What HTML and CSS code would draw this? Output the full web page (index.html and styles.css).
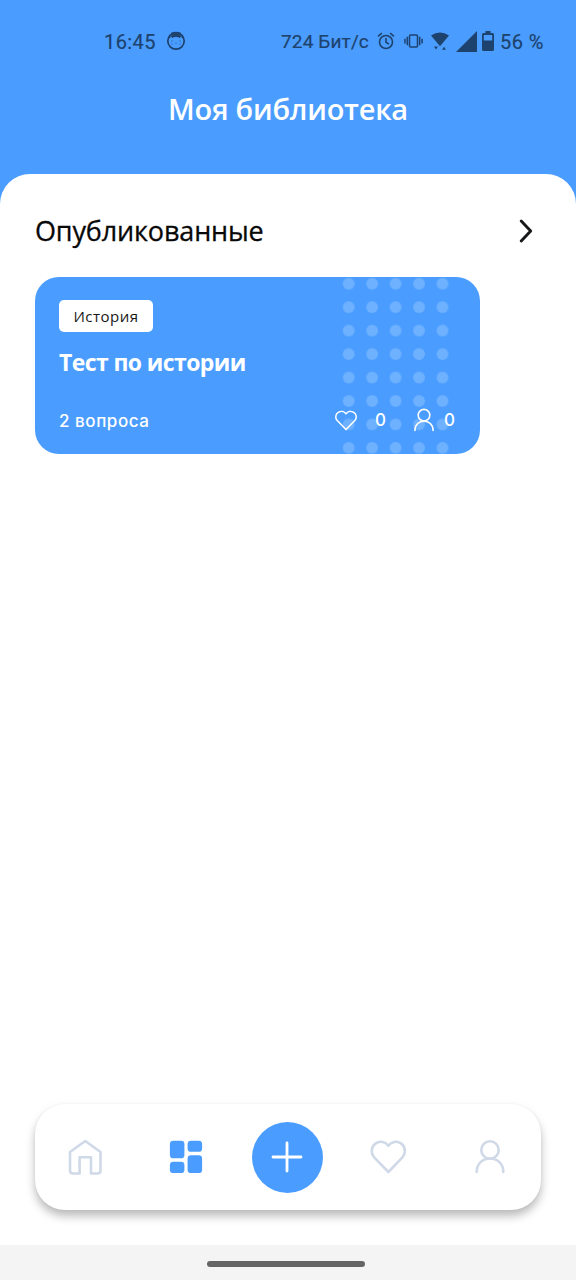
FILE: index.html
```html
<!DOCTYPE html>
<html lang="ru">
<head>
<meta charset="utf-8">
<title>Моя библиотека</title>
<link rel="stylesheet" href="styles.css">
</head>
<body>
<div class="app">
  <header class="header">
    <div class="status">
      <span class="clock">16:45</span>
      <svg class="cat" width="20" height="20" viewBox="0 0 20 20"><circle cx="10" cy="10" r="8.200" fill="none" stroke="currentColor" stroke-width="1.700"/><path d="M5 1.800Q10-.5 15 1.800L14 7.300Q12.500 5.800 10 6Q7.500 5.800 6 7.300Z" fill="currentColor"/><path d="M3 7l3-2M17 7l-3-2" stroke="currentColor" stroke-width="1"/><path d="M5.500 10h1M13.500 10h1M5.500 13h1M13.500 13h1M9.500 12.200h1" stroke="currentColor" stroke-width=".8"/></svg>
      <span class="speed">724 Бит/с</span>
      <svg class="alarm" width="18" height="18" viewBox="0 0 18 18" fill="none" stroke="currentColor" stroke-width="1.600"><circle cx="9" cy="10" r="6.500"/><path d="M1 4.400L4.800 1.200M17 4.400L13.200 1.200M9 6v4.300l3 1.800"/></svg>
      <svg class="vibrate" width="19" height="18" viewBox="0 0 20 18" fill="none" stroke="currentColor" stroke-width="1.600"><rect x="5.800" y="2.800" width="8.400" height="12.400" rx="1"/><path d="M3.500 4.500v9M1 6.500v5M16.500 4.500v9M19 6.500v5"/></svg>
      <svg class="wifi" width="20" height="20" viewBox="0 0 20 20" fill="currentColor"><path d="M1 4.500Q10-1.500 19 4.500L10 15.200Z"/><path d="M4 15.500h4l-2 3zM12 18.800h4l-2-3z"/></svg>
      <svg class="signal" width="21" height="21" viewBox="0 0 21 21"><path d="M0 21L21 0V21Z" fill="currentColor"/></svg>
      <svg class="battery" width="12" height="20" viewBox="0 0 12 20"><path d="M3.500 0h5v2h2Q12 2 12 3.500v15q0 1.500-1.500 1.500h-9Q0 20 0 18.500v-15Q0 2 1.500 2h2ZM1.800 4v5.500h8.400V4Z" fill="currentColor" fill-rule="evenodd"/></svg>
      <span class="percent">56 %</span>
    </div>
    <h1 class="title">Моя библиотека</h1>
  </header>
  <main class="sheet">
    <div class="section">
      <h2 class="section-title">Опубликованные</h2>
      <svg class="chevron" width="18" height="26" viewBox="0 0 18 26"><path d="M4.200 3l9.500 10L4.200 23" fill="none" stroke="#17181a" stroke-width="2.900" stroke-linecap="round" stroke-linejoin="round"/></svg>
    </div>
    <article class="card">
      <svg class="dots" width="120" height="177" viewBox="0 0 120 177"><defs><pattern id="dot" width="23.450" height="23.450" patternUnits="userSpaceOnUse" y="-5"><circle cx="11.700" cy="11.700" r="5.900" fill="#fff" fill-opacity=".2"/></pattern></defs><rect width="117.200" height="177" fill="url(#dot)"/></svg>
      <span class="tag">История</span>
      <h3 class="card-title">Тест по истории</h3>
      <div class="meta">
        <span class="questions">2 вопроса</span>
        <svg class="likes" width="24" height="24" viewBox="0 0 24 24" fill="none" stroke="#fff" stroke-width="1.500" stroke-linejoin="round"><path d="M12 21.600L3.200 12.500C.8 9.900 1.500 6.100 4.300 4.400C7 2.700 10.300 3.200 12 5.800C13.700 3.200 17 2.700 19.700 4.400C22.500 6.100 23.200 9.900 20.800 12.500Z"/></svg>
        <span class="like-count">0</span>
        <svg class="players" width="24" height="24" viewBox="0 0 24 24" fill="none" stroke="#fff" stroke-width="1.600" stroke-linecap="round"><circle cx="12" cy="7.200" r="5.800"/><path d="M2.900 22.500C2.900 10 21.100 10 21.100 22.500"/></svg>
        <span class="player-count">0</span>
      </div>
    </article>
  </main>
  <nav class="tabs">
    <a class="tab"><svg width="36" height="38" viewBox="0 0 36 38" fill="none" stroke="#d0d9e7" stroke-width="2.600" stroke-linejoin="round"><path d="M3 14L18.300 3l15.200 11v18.500q0 3-3 3h-6.500V19.200H12.600V35.500H6q-3 0-3-3Z"/></svg></a>
    <a class="tab"><svg width="34" height="34" viewBox="0 0 34 34" fill="#4a9dff"><rect x=".9" y=".8" width="14.500" height="17.500" rx="3.400"/><rect x="18.600" y=".8" width="14.500" height="11" rx="3.400"/><rect x=".9" y="21.800" width="14.500" height="11.300" rx="3.400"/><rect x="18.600" y="15.300" width="14.500" height="17.800" rx="3.400"/></svg></a>
    <a class="tab add"><svg width="32" height="32" viewBox="0 0 32 32"><path d="M16 2v28M2 16h28" stroke="#fff" stroke-width="2.800" stroke-linecap="round"/></svg></a>
    <a class="tab"><svg width="38" height="34" viewBox="0 0 38 34" fill="none" stroke="#d0d9e7" stroke-width="2.600" stroke-linejoin="round"><path d="M19.400 32L5.400 17.700C1.400 13.500 2.100 6.700 6.400 3.600C10.900.3 16.700 1.700 19.400 5.700C22.100 1.700 27.900.3 32.400 3.600C36.500 6.700 37.200 13.500 33.200 17.700Z"/></svg></a>
    <a class="tab"><svg width="34" height="36" viewBox="0 0 34 36" fill="none" stroke="#d0d9e7" stroke-width="2.600" stroke-linecap="round"><circle cx="17" cy="11" r="8.700"/><path d="M3.700 33C3.700 15 30.300 15 30.300 33"/></svg></a>
  </nav>
  <footer class="system-bar"><div class="handle"></div></footer>
</div>
</body>
</html>
```
FILE: styles.css
```css
* { box-sizing: border-box; }
body { margin: 0; background: #4a9dff; font-family: "Open Sans", "Noto Sans", sans-serif; }
svg { display: block; flex: none; }
h1, h2, h3 { margin: 0; white-space: nowrap; }
.app { width: 576px; height: 1280px; display: flex; flex-direction: column; background: #fff; }
.header { height: 210px; flex: none; background: #4a9dff; }
.status { height: 82px; padding-left: 104px; display: flex; align-items: center; color: #1d426d; font: 400 20px/24px Roboto, sans-serif; -webkit-text-stroke: .2px #1d426d; white-space: nowrap; }
.clock { width: 52px; padding-top: 2px; letter-spacing: .4px; }
.cat { margin-left: 10px; }
.speed { width: 88px; margin-left: 95px; padding-top: 2px; font-size: 19px; letter-spacing: .15px; }
.alarm { margin-left: 8px; }
.vibrate { margin-left: 9px; }
.wifi { margin-left: 7px; }
.signal { margin-left: 6px; }
.battery { margin-left: 5px; }
.percent { margin-left: 6px; padding-top: 2px; letter-spacing: .4px; }
.title { height: 54px; line-height: 54px; text-align: center; color: #fff; font-size: 29px; font-weight: 600; letter-spacing: -.25px; }
.sheet { flex: 1; margin-top: -36px; padding: 30px 35px 0; background: #fff; border-radius: 30px 30px 0 0; }
.section { height: 54px; display: flex; justify-content: space-between; align-items: center; }
.section-title { color: #080808; font-size: 27px; font-weight: 500; line-height: 56px; letter-spacing: -.15px; -webkit-text-stroke: .3px #080808; }
.chevron { margin-right: 6px; }
.card { position: relative; width: 445px; height: 177px; margin-top: 19px; padding: 23px 24px; display: flex; flex-direction: column; align-items: flex-start; overflow: hidden; border-radius: 24px; background: #4a9dff; color: #fff; }
.dots { position: absolute; top: 0; left: 302px; }
.tag { width: 94px; height: 32px; border-radius: 5px; background: #fff; color: #171717; font-size: 15px; line-height: 32px; letter-spacing: .5px; text-align: center; }
.card-title { margin-top: 14px; font-size: 23px; font-weight: 700; line-height: 32px; letter-spacing: -.6px; }
.meta { position: relative; width: 100%; height: 24px; margin-top: 30px; display: flex; align-items: center; font: 500 17px/24px Inter, "Open Sans", sans-serif; }
.questions { width: 275px; padding-top: 1px; white-space: nowrap; letter-spacing: .55px; }
.like-count { margin-left: 17px; width: 12px; font-size: 17px; }
.players { margin-left: 25px; }
.player-count { margin-left: 8px; font-size: 17px; }
.tabs { height: 106px; flex: none; margin: 0 35px 35px; display: flex; justify-content: space-between; align-items: center; padding: 0 16px 0 14px; border-radius: 30px; background: #fff; box-shadow: 0 6px 10px rgba(0, 0, 0, .27), 0 0 2px rgba(0, 0, 0, .06); }
.tab { width: 71px; height: 71px; display: flex; align-items: center; justify-content: center; }
.add { border-radius: 50%; background: #4a9dff; }
.system-bar { height: 35px; flex: none; padding-top: 16px; background: #f4f4f4; }
.handle { width: 158px; height: 6px; margin: 0 auto; transform: translateX(-2px); border-radius: 3px; background: #656565; }
```
